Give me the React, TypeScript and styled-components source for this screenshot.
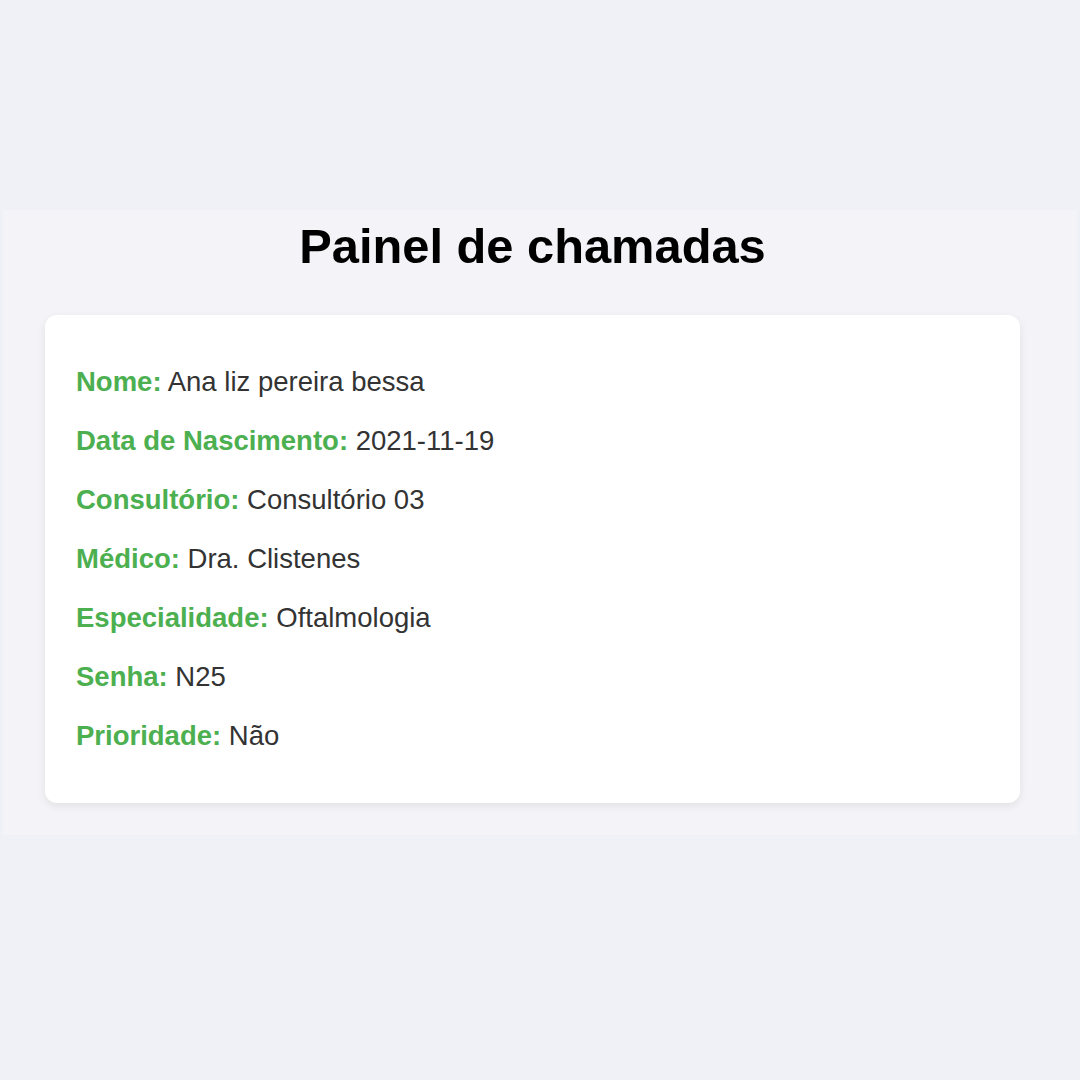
import React from 'react';
import styled, { createGlobalStyle } from 'styled-components';

const GlobalStyle = createGlobalStyle`
  html, body {
    margin: 0;
    padding: 0;
    background: #f0f1f6;
    font-family: "Liberation Sans", Arial, sans-serif;
  }
`;

const Page = styled.div`
  width: 1080px;
  height: 1080px;
  padding: 210px 3px 0;
  box-sizing: border-box;
`;

const Panel = styled.section`
  background: #f4f4f8;
  padding: 9px 57px 32px 42px;
  display: flex;
  flex-direction: column;
  align-items: stretch;
`;

const Title = styled.h1`
  margin: 0 0 42px;
  font-size: 48.8px;
  line-height: 54px;
  font-weight: 700;
  color: #000;
  text-align: center;
`;

const Card = styled.div`
  background: #fff;
  border-radius: 12px;
  box-shadow: 0 3px 8px rgba(0, 0, 0, 0.08);
  padding: 51px 30px 52px 31px;
  display: flex;
  flex-direction: column;
  gap: 28px;
`;

const Row = styled.p`
  margin: 0;
  font-size: 27.5px;
  line-height: 31px;
  color: #333;
`;

const Label = styled.strong`
  color: #4caf50;
  font-weight: 700;
`;

interface Field {
  label: string;
  value: string;
}

const fields: Field[] = [
  { label: 'Nome', value: 'Ana liz pereira bessa' },
  { label: 'Data de Nascimento', value: '2021-11-19' },
  { label: 'Consultório', value: 'Consultório 03' },
  { label: 'Médico', value: 'Dra. Clistenes' },
  { label: 'Especialidade', value: 'Oftalmologia' },
  { label: 'Senha', value: 'N25' },
  { label: 'Prioridade', value: 'Não' },
];

const App: React.FC = () => {
  return (
    <>
      <GlobalStyle />
      <Page>
        <Panel>
          <Title>Painel de chamadas</Title>
          <Card>
            {fields.map((f) => (
              <Row key={f.label}>
                <Label>{f.label}:</Label> {f.value}
              </Row>
            ))}
          </Card>
        </Panel>
      </Page>
    </>
  );
};

export default App;
